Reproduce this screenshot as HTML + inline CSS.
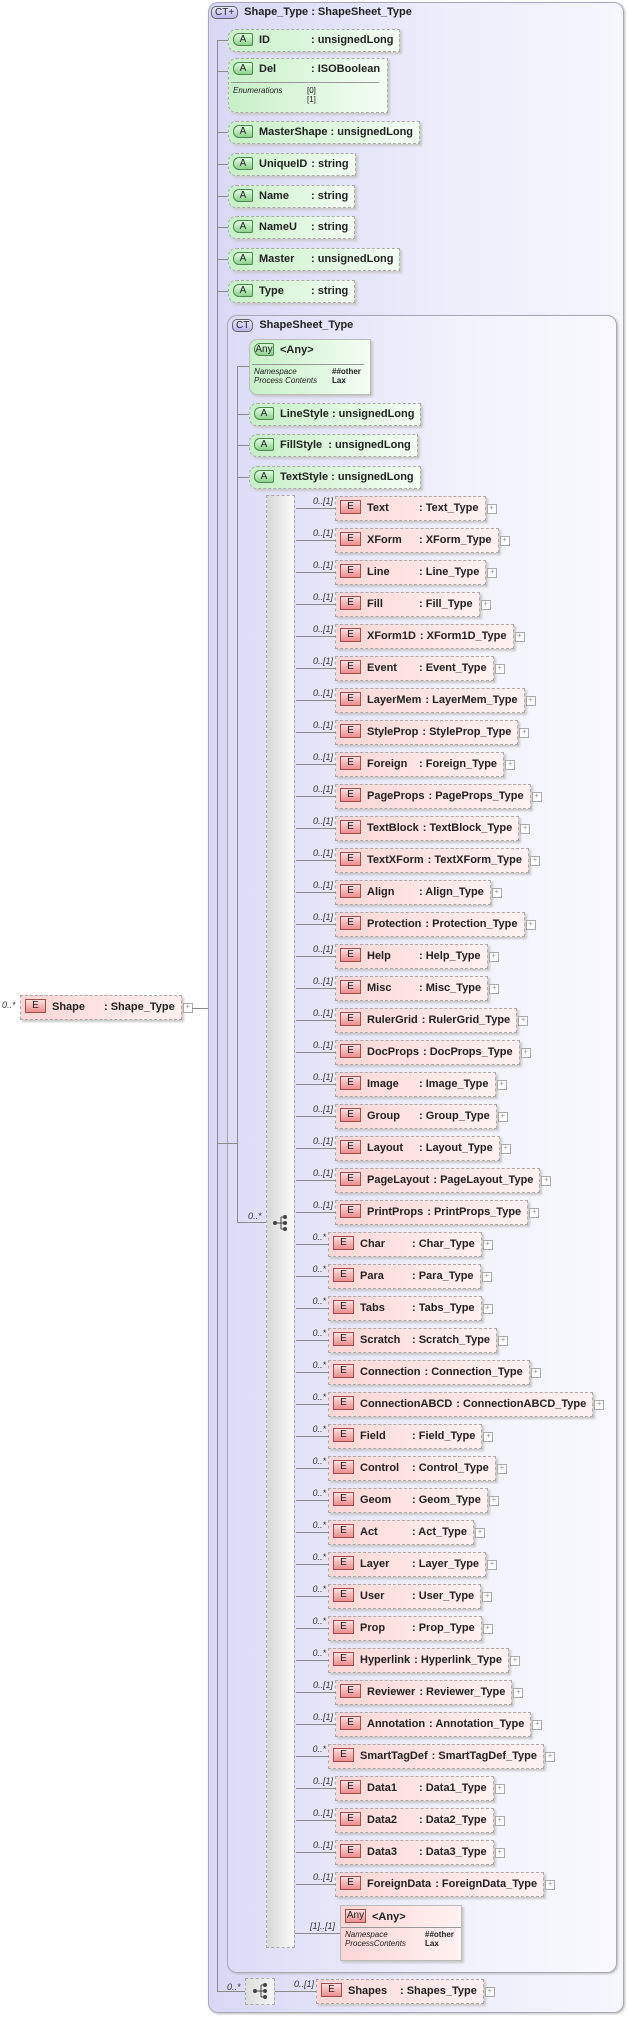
<!DOCTYPE html>
<html><head><meta charset="utf-8"><style>
*{box-sizing:border-box;margin:0;padding:0}
body{width:628px;height:2018px;background:#fff;position:relative;overflow:hidden;font-family:"Liberation Sans",Arial,sans-serif;font-size:11px;color:#222}
.abs{position:absolute}
.ob{position:absolute;left:208px;top:2px;width:416px;height:2011px;border:1px solid #a8a8b8;border-radius:10px;background:linear-gradient(to right,#d8d8f6,#eeeefb 60%,#f6f6fd);box-shadow:1px 1px 2px #bbb}
.ib{position:absolute;left:227px;top:315px;width:390px;height:1658px;border:1px solid #a8a8b8;border-radius:10px;background:linear-gradient(to right,#dcdcf7,#f2f2fc 60%,#f8f8fe);box-shadow:1px 1px 2px #bbb}
.h{position:absolute;height:1px;background:#8a8a8a}
.v{position:absolute;width:1px;background:#8a8a8a}
.ct{display:inline-block;border:1px solid #666;border-radius:5px;background:linear-gradient(#e8e8ff,#b8b8ee);font-size:10px;font-weight:normal;padding:0 3px;line-height:11px;margin-right:6px}
.r{position:absolute;height:25px;line-height:23px;padding:0 6px 0 4px;border:1px dashed #aaa;background:linear-gradient(to right,#fcd6d6,#fff2f2);box-shadow:2px 2px 2px #c8c8c8;font-weight:bold;white-space:nowrap}
.r::after{content:"+";position:absolute;right:-12px;top:7px;width:8px;height:8px;border:1px solid #aaa;background:#fff;font-size:8px;line-height:6px;text-align:center;color:#999;font-weight:normal}
.r::before{content:"";position:absolute;top:11px;right:100%;height:1px;background:#8a8a8a}
.a::before{width:40px}.s::before{width:33px}
.a{left:335px}.s{left:328px}
.r i{position:absolute;right:100%;margin-right:3px;top:-1px;font-size:9px;font-weight:normal;line-height:11px;color:#333}
.e{display:inline-block;width:21px;height:14px;line-height:12px;border:1px solid #a05050;background:linear-gradient(#fde0e0,#ee8c8c);text-align:center;font-weight:normal;font-size:10px;margin-right:6px;vertical-align:middle;position:relative;top:-1px}
.n{display:inline-block;min-width:52px;padding-right:4px}
.at{position:absolute;height:23px;line-height:21px;padding:0 6px 0 4px;border:1px dashed #aaa;border-radius:8px 0 0 8px;background:linear-gradient(to right,#c8f0c8,#f4fdf4);box-shadow:2px 2px 2px #c8c8c8;font-weight:bold;white-space:nowrap}
.ga{display:inline-block;width:20px;height:13px;line-height:11px;border:1px solid #4a8a4a;border-radius:6px 2px 2px 6px;background:linear-gradient(#e0ffe0,#8ed08e);text-align:center;font-weight:normal;font-size:10px;margin-right:6px;vertical-align:middle;position:relative;top:-1px}
.det{font-size:8px;font-weight:normal;font-style:italic;line-height:9px}
.comp{position:absolute;border:1px dashed #aaa;background:linear-gradient(to right,#d8d8d8,#fafafa)}
.card{position:absolute;font-size:9px;font-style:italic;color:#333}
</style></head><body>

<div class="card" style="left:2px;top:1000px">0..*</div>
<div class="r" style="left:20px;top:995px;background:linear-gradient(to right,#fcd6d6,#fff0f0)"><span class="e">E</span><span class="n">Shape</span>: Shape_Type</div>
<div class="h" style="left:192px;top:1008px;width:25px"></div>

<div class="ob"></div>
<div class="abs" style="left:211px;top:6px;font-weight:bold"><span class="ct">CT+</span>Shape_Type : ShapeSheet_Type</div>
<div class="v" style="left:217px;top:40px;height:1951px"></div>

<div class="h" style="left:217px;top:40px;width:11px"></div>
<div class="at" style="left:228px;top:29px"><span class="ga">A</span><span class="n">ID</span>: unsignedLong</div>
<div class="h" style="left:217px;top:71px;width:11px"></div>
<div class="at" style="left:228px;top:58px;height:55px;width:160px"><span class="ga">A</span><span class="n">Del</span>: ISOBoolean
<div style="border-top:1px solid #999;margin:2px 2px 0 -2px"></div>
<div class="det" style="position:relative;margin-top:3px;height:20px">Enumerations<span style="position:absolute;left:74px;top:0;font-style:normal">[0]<br>[1]</span></div></div>
<div class="h" style="left:217px;top:132px;width:11px"></div>
<div class="at" style="left:228px;top:121px"><span class="ga">A</span>MasterShape : unsignedLong</div>
<div class="h" style="left:217px;top:164px;width:11px"></div>
<div class="at" style="left:228px;top:153px"><span class="ga">A</span><span class="n">UniqueID</span>: string</div>
<div class="h" style="left:217px;top:196px;width:11px"></div>
<div class="at" style="left:228px;top:185px"><span class="ga">A</span><span class="n">Name</span>: string</div>
<div class="h" style="left:217px;top:227px;width:11px"></div>
<div class="at" style="left:228px;top:216px"><span class="ga">A</span><span class="n">NameU</span>: string</div>
<div class="h" style="left:217px;top:259px;width:11px"></div>
<div class="at" style="left:228px;top:248px"><span class="ga">A</span><span class="n">Master</span>: unsignedLong</div>
<div class="h" style="left:217px;top:291px;width:11px"></div>
<div class="at" style="left:228px;top:280px"><span class="ga">A</span><span class="n">Type</span>: string</div>

<div class="ib"></div>
<div class="h" style="left:217px;top:1143px;width:20px"></div>
<div class="abs" style="left:232px;top:319px;font-weight:bold"><span class="ct">CT</span>ShapeSheet_Type</div>
<div class="v" style="left:237px;top:366px;height:857px"></div>

<div class="h" style="left:237px;top:366px;width:12px"></div>
<div class="at" style="left:249px;top:339px;height:56px;width:122px;border-style:solid;border-color:#bbb"><span class="ga" style="border-radius:6px 2px 2px 6px">Any</span>&lt;Any&gt;
<div style="border-top:1px solid #999;margin:3px 0 0 -2px"></div>
<div class="det" style="margin-top:2px;position:relative">Namespace<b style="left:78px;top:0;position:absolute;font-style:normal">##other</b><br>Process Contents<b style="left:78px;top:9px;position:absolute;font-style:normal">Lax</b></div></div>
<div class="h" style="left:237px;top:414px;width:12px"></div>
<div class="at" style="left:249px;top:403px"><span class="ga">A</span>LineStyle : unsignedLong</div>
<div class="h" style="left:237px;top:445px;width:12px"></div>
<div class="at" style="left:249px;top:434px"><span class="ga">A</span>FillStyle&nbsp; : unsignedLong</div>
<div class="h" style="left:237px;top:477px;width:12px"></div>
<div class="at" style="left:249px;top:466px"><span class="ga">A</span>TextStyle : unsignedLong</div>

<div class="comp" style="left:266px;top:495px;width:29px;height:1453px"></div>
<div class="h" style="left:237px;top:1222px;width:29px"></div>
<div class="card" style="left:248px;top:1211px">0..*</div>
<svg class="abs" style="left:272px;top:1214px" width="16" height="18"><circle cx="3" cy="9" r="2" fill="#444"/><path d="M5 9H9M9 3V15M9 3H11M9 9H11M9 15H11" stroke="#444" fill="none"/><circle cx="13" cy="3" r="2" fill="#444"/><circle cx="13" cy="9" r="2" fill="#444"/><circle cx="13" cy="15" r="2" fill="#444"/></svg>

<div class="r a" style="top:496px"><i>0..[1]</i><span class="e">E</span><span class="n">Text</span>: Text_Type</div>
<div class="r a" style="top:528px"><i>0..[1]</i><span class="e">E</span><span class="n">XForm</span>: XForm_Type</div>
<div class="r a" style="top:560px"><i>0..[1]</i><span class="e">E</span><span class="n">Line</span>: Line_Type</div>
<div class="r a" style="top:592px"><i>0..[1]</i><span class="e">E</span><span class="n">Fill</span>: Fill_Type</div>
<div class="r a" style="top:624px"><i>0..[1]</i><span class="e">E</span><span class="n">XForm1D</span>: XForm1D_Type</div>
<div class="r a" style="top:656px"><i>0..[1]</i><span class="e">E</span><span class="n">Event</span>: Event_Type</div>
<div class="r a" style="top:688px"><i>0..[1]</i><span class="e">E</span><span class="n">LayerMem</span>: LayerMem_Type</div>
<div class="r a" style="top:720px"><i>0..[1]</i><span class="e">E</span><span class="n">StyleProp</span>: StyleProp_Type</div>
<div class="r a" style="top:752px"><i>0..[1]</i><span class="e">E</span><span class="n">Foreign</span>: Foreign_Type</div>
<div class="r a" style="top:784px"><i>0..[1]</i><span class="e">E</span><span class="n">PageProps</span>: PageProps_Type</div>
<div class="r a" style="top:816px"><i>0..[1]</i><span class="e">E</span><span class="n">TextBlock</span>: TextBlock_Type</div>
<div class="r a" style="top:848px"><i>0..[1]</i><span class="e">E</span><span class="n">TextXForm</span>: TextXForm_Type</div>
<div class="r a" style="top:880px"><i>0..[1]</i><span class="e">E</span><span class="n">Align</span>: Align_Type</div>
<div class="r a" style="top:912px"><i>0..[1]</i><span class="e">E</span><span class="n">Protection</span>: Protection_Type</div>
<div class="r a" style="top:944px"><i>0..[1]</i><span class="e">E</span><span class="n">Help</span>: Help_Type</div>
<div class="r a" style="top:976px"><i>0..[1]</i><span class="e">E</span><span class="n">Misc</span>: Misc_Type</div>
<div class="r a" style="top:1008px"><i>0..[1]</i><span class="e">E</span><span class="n">RulerGrid</span>: RulerGrid_Type</div>
<div class="r a" style="top:1040px"><i>0..[1]</i><span class="e">E</span><span class="n">DocProps</span>: DocProps_Type</div>
<div class="r a" style="top:1072px"><i>0..[1]</i><span class="e">E</span><span class="n">Image</span>: Image_Type</div>
<div class="r a" style="top:1104px"><i>0..[1]</i><span class="e">E</span><span class="n">Group</span>: Group_Type</div>
<div class="r a" style="top:1136px"><i>0..[1]</i><span class="e">E</span><span class="n">Layout</span>: Layout_Type</div>
<div class="r a" style="top:1168px"><i>0..[1]</i><span class="e">E</span><span class="n">PageLayout</span>: PageLayout_Type</div>
<div class="r a" style="top:1200px"><i>0..[1]</i><span class="e">E</span><span class="n">PrintProps</span>: PrintProps_Type</div>
<div class="r s" style="top:1232px"><i>0..*</i><span class="e">E</span><span class="n">Char</span>: Char_Type</div>
<div class="r s" style="top:1264px"><i>0..*</i><span class="e">E</span><span class="n">Para</span>: Para_Type</div>
<div class="r s" style="top:1296px"><i>0..*</i><span class="e">E</span><span class="n">Tabs</span>: Tabs_Type</div>
<div class="r s" style="top:1328px"><i>0..*</i><span class="e">E</span><span class="n">Scratch</span>: Scratch_Type</div>
<div class="r s" style="top:1360px"><i>0..*</i><span class="e">E</span><span class="n">Connection</span>: Connection_Type</div>
<div class="r s" style="top:1392px"><i>0..*</i><span class="e">E</span><span class="n">ConnectionABCD</span>: ConnectionABCD_Type</div>
<div class="r s" style="top:1424px"><i>0..*</i><span class="e">E</span><span class="n">Field</span>: Field_Type</div>
<div class="r s" style="top:1456px"><i>0..*</i><span class="e">E</span><span class="n">Control</span>: Control_Type</div>
<div class="r s" style="top:1488px"><i>0..*</i><span class="e">E</span><span class="n">Geom</span>: Geom_Type</div>
<div class="r s" style="top:1520px"><i>0..*</i><span class="e">E</span><span class="n">Act</span>: Act_Type</div>
<div class="r s" style="top:1552px"><i>0..*</i><span class="e">E</span><span class="n">Layer</span>: Layer_Type</div>
<div class="r s" style="top:1584px"><i>0..*</i><span class="e">E</span><span class="n">User</span>: User_Type</div>
<div class="r s" style="top:1616px"><i>0..*</i><span class="e">E</span><span class="n">Prop</span>: Prop_Type</div>
<div class="r s" style="top:1648px"><i>0..*</i><span class="e">E</span><span class="n">Hyperlink</span>: Hyperlink_Type</div>
<div class="r a" style="top:1680px"><i>0..[1]</i><span class="e">E</span><span class="n">Reviewer</span>: Reviewer_Type</div>
<div class="r a" style="top:1712px"><i>0..[1]</i><span class="e">E</span><span class="n">Annotation</span>: Annotation_Type</div>
<div class="r s" style="top:1744px"><i>0..*</i><span class="e">E</span><span class="n">SmartTagDef</span>: SmartTagDef_Type</div>
<div class="r a" style="top:1776px"><i>0..[1]</i><span class="e">E</span><span class="n">Data1</span>: Data1_Type</div>
<div class="r a" style="top:1808px"><i>0..[1]</i><span class="e">E</span><span class="n">Data2</span>: Data2_Type</div>
<div class="r a" style="top:1840px"><i>0..[1]</i><span class="e">E</span><span class="n">Data3</span>: Data3_Type</div>
<div class="r a" style="top:1872px"><i>0..[1]</i><span class="e">E</span><span class="n">ForeignData</span>: ForeignData_Type</div>

<div class="h" style="left:295px;top:1933px;width:45px"></div>
<div class="card" style="left:310px;top:1921px">[1]..[1]</div>
<div class="abs" style="left:340px;top:1905px;width:122px;height:56px;border:1px solid #bbb;background:linear-gradient(to right,#fcd6d6,#fff2f2);box-shadow:2px 2px 2px #c8c8c8;padding:4px 0 0 4px;font-weight:bold"><span class="e" style="margin-right:6px">Any</span>&lt;Any&gt;
<div style="border-top:1px solid #999;margin:3px 0 0 -4px"></div>
<div class="det" style="margin-top:2px;position:relative">Namespace<b style="left:80px;top:0;position:absolute;font-style:normal">##other</b><br>ProcessContents<b style="left:80px;top:9px;position:absolute;font-style:normal">Lax</b></div></div>

<div class="h" style="left:217px;top:1991px;width:28px"></div>
<div class="card" style="left:227px;top:1982px">0..*</div>
<div class="comp" style="left:245px;top:1978px;width:30px;height:27px;background:linear-gradient(to right,#ddd,#f4f4f4)"></div>
<svg class="abs" style="left:252px;top:1982px" width="16" height="18"><circle cx="3" cy="9" r="2" fill="#444"/><path d="M5 9H9M9 3V15M9 3H11M9 9H11M9 15H11" stroke="#444" fill="none"/><circle cx="13" cy="3" r="2" fill="#444"/><circle cx="13" cy="9" r="2" fill="#444"/><circle cx="13" cy="15" r="2" fill="#444"/></svg>
<div class="r" style="left:316px;top:1979px"><i>0..[1]</i><span class="e">E</span><span class="n">Shapes</span>: Shapes_Type</div>
<div class="h" style="left:275px;top:1991px;width:41px"></div>
</body></html>
